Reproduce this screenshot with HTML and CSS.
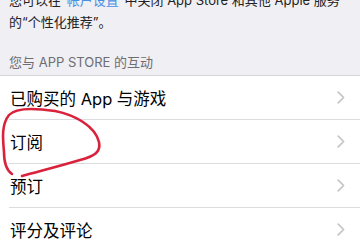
FILE: index.html
```html
<!DOCTYPE html>
<html lang="zh-CN">
<head>
<meta charset="utf-8">
<link rel="stylesheet" href="styles.css">
</head>
<body>
<div class="page">
  <p class="footer">您可以在<span class="link">“帐户设置”</span>中关闭 App Store 和其他 Apple 服务的“个性化推荐”。</p>
  <div class="section-header">您与 APP STORE 的互动</div>
  <ul class="group">
    <li class="row"><div class="row-inner"><span class="label">已购买的 App 与游戏</span><svg class="chev" width="8" height="13" viewBox="0 0 8 13"><path d="M1.2 1.2 L6.6 6.5 L1.2 11.8" fill="none" stroke="#c4c4c9" stroke-width="1.7" stroke-linecap="round" stroke-linejoin="round"/></svg></div></li>
    <li class="row"><div class="row-inner"><span class="label">订阅</span><svg class="chev" width="8" height="13" viewBox="0 0 8 13"><path d="M1.2 1.2 L6.6 6.5 L1.2 11.8" fill="none" stroke="#c4c4c9" stroke-width="1.7" stroke-linecap="round" stroke-linejoin="round"/></svg></div></li>
    <li class="row"><div class="row-inner"><span class="label">预订</span><svg class="chev" width="8" height="13" viewBox="0 0 8 13"><path d="M1.2 1.2 L6.6 6.5 L1.2 11.8" fill="none" stroke="#c4c4c9" stroke-width="1.7" stroke-linecap="round" stroke-linejoin="round"/></svg></div></li>
    <li class="row"><div class="row-inner"><span class="label">评分及评论</span><svg class="chev" width="8" height="13" viewBox="0 0 8 13"><path d="M1.2 1.2 L6.6 6.5 L1.2 11.8" fill="none" stroke="#c4c4c9" stroke-width="1.7" stroke-linecap="round" stroke-linejoin="round"/></svg></div></li>
  </ul>
  <svg class="scribble" width="360" height="240" viewBox="0 0 360 240">
    <path d="M12 174 C6 170 4 163 4 152 C3 140 1 125 9 115 C16 107 35 108 55 111 C75 115 95 126 99 142 C101 152 95 156 80 160 C60 166 40 171 22 176" fill="none" stroke="#d9223c" stroke-width="2.6" stroke-linecap="round" stroke-linejoin="round"/>
  </svg>
</div>
</body>
</html>
```

FILE: styles.css
```css
html, body {
  margin: 0;
  padding: 0;
}
body {
  background: #efeff4;
  font-family: Inter, "Noto Sans CJK SC", sans-serif;
  width: 360px;
  height: 240px;
  overflow: hidden;
}
.page {
  position: relative;
  width: 360px;
  height: 240px;
  overflow: hidden;
}
.footer {
  margin: -11px 0 0 0;
  padding: 0 14px 0 9px;
  font-size: 13px;
  line-height: 22px;
  color: #222;
}
.link {
  color: #4a90e2;
}
.section-header {
  padding: 21px 9px 5px;
  font-size: 13px;
  line-height: 16px;
  color: #6d6d72;
}
.group {
  list-style: none;
  margin: 0;
  padding: 0;
  background: #fff;
  border-top: 1px solid #d6d6da;
}
.row {
  padding-left: 9px;
}
.row-inner {
  display: flex;
  align-items: center;
  justify-content: space-between;
  height: 43px;
  padding-right: 15px;
  border-bottom: 1px solid #dcdce0;
}
.label {
  font-size: 16.5px;
  color: #000;
  padding-left: 1px;
}
.chev {
  display: block;
}
.scribble {
  position: absolute;
  left: 0;
  top: 0;
  pointer-events: none;
}
```
